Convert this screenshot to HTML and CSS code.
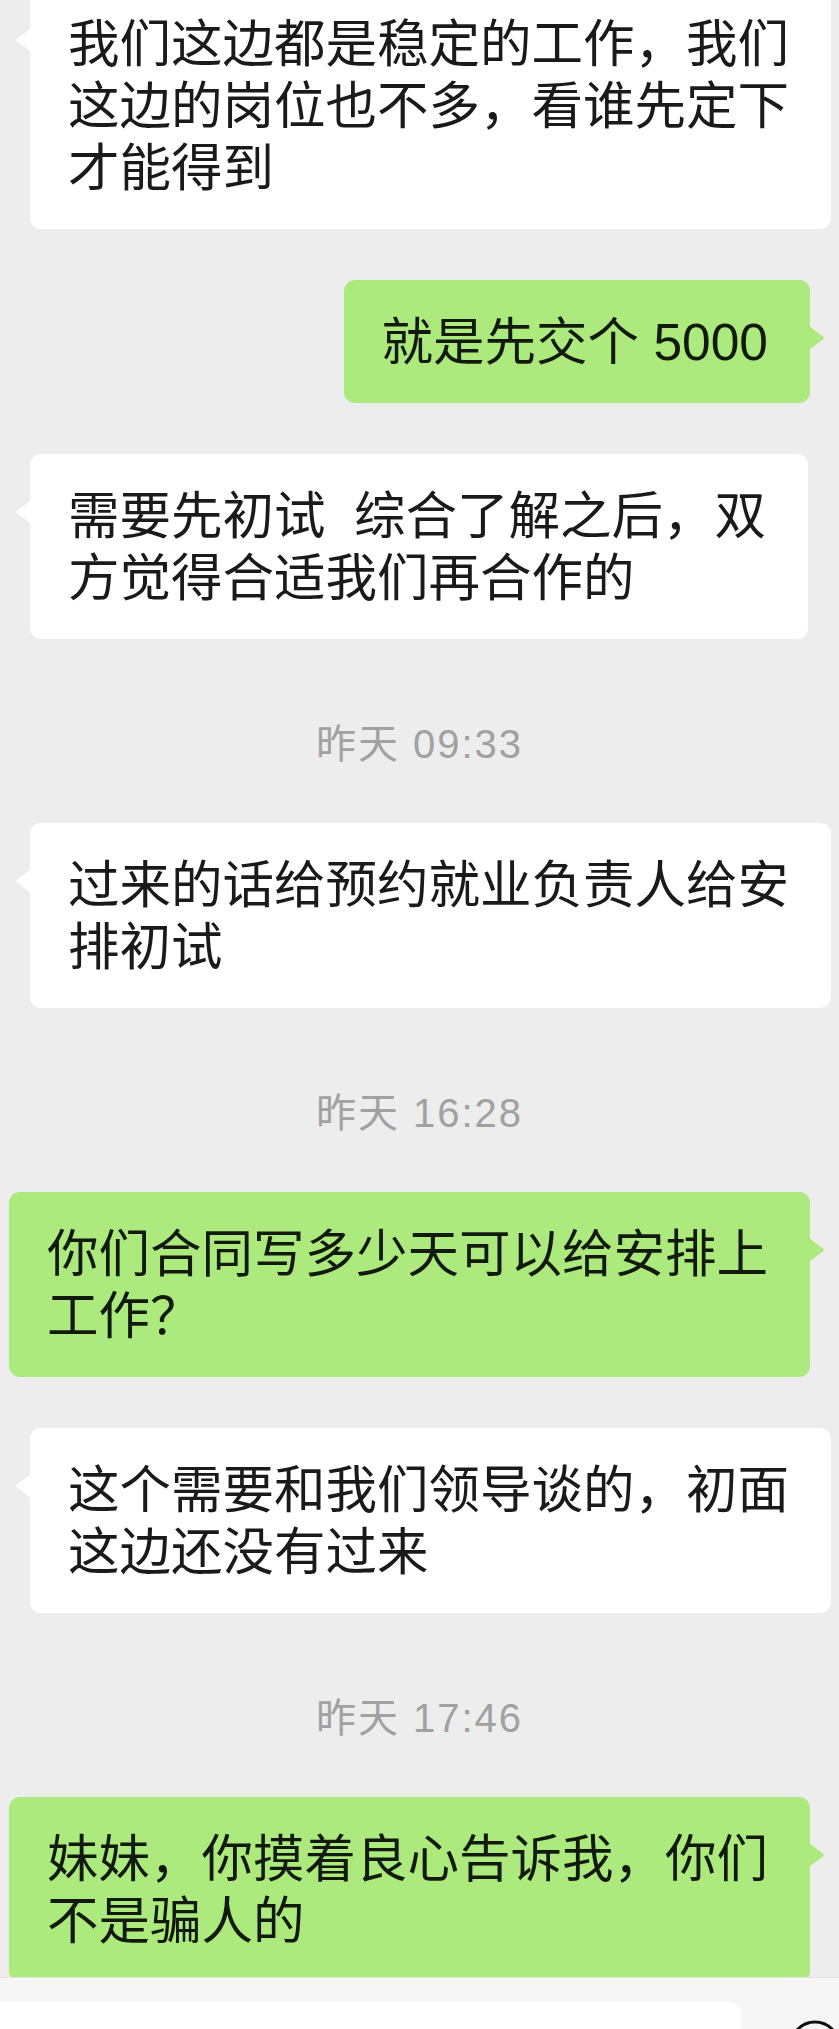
FILE: index.html
```html
<!DOCTYPE html>
<html lang="zh-CN">
<head>
<meta charset="utf-8">
<title>聊天</title>
<link rel="stylesheet" href="styles.css">
</head>
<body>
<main class="chat">
  <div class="bubble in">我们这边都是稳定的工作，我们<br>这边的岗位也不多，看谁先定下<br>才能得到</div>
  <div class="bubble out">就是先交个 5000</div>
  <div class="bubble in">需要先初试&nbsp; 综合了解之后，双<br>方觉得合适我们再合作的</div>
  <div class="time">昨天 09:33</div>
  <div class="bubble in">过来的话给预约就业负责人给安<br>排初试</div>
  <div class="time">昨天 16:28</div>
  <div class="bubble out">你们合同写多少天可以给安排上<br>工作？</div>
  <div class="bubble in">这个需要和我们领导谈的，初面<br>这边还没有过来</div>
  <div class="time">昨天 17:46</div>
  <div class="bubble out">妹妹，你摸着良心告诉我，你们<br>不是骗人的</div>
</main>
<footer class="inputbar">
  <div class="input"></div>
  <svg class="icon" width="52" height="52" viewBox="0 0 52 52"><circle cx="26" cy="26" r="24" fill="none" stroke="#111" stroke-width="3"/></svg>
</footer>
</body>
</html>
```
FILE: styles.css
```css
html, body {
  margin: 0;
  padding: 0;
}
body {
  background: #ededed;
  height: 2029px;
  overflow: hidden;
  font-family: "Liberation Sans", "Noto Sans CJK SC", sans-serif;
}
.chat {
  display: flex;
  flex-direction: column;
  gap: 51px;
  margin-top: -18px;
}
.bubble {
  position: relative;
  box-sizing: border-box;
  max-width: 820px;
  padding: 31px 42px 30px 38px;
  font-size: 51.5px;
  line-height: 62px;
  border-radius: 11px;
  white-space: nowrap;
}
.bubble.in {
  align-self: flex-start;
  margin-left: 30px;
  background: #ffffff;
  color: #1a1a1a;
}
.bubble.out {
  align-self: flex-end;
  margin-right: 29px;
  background: #acea7d;
  color: #111a0c;
}
.bubble::before {
  content: "";
  position: absolute;
  top: 46px;
  width: 16px;
  height: 24px;
  background: inherit;
}
.bubble.in::before {
  left: -15px;
  clip-path: path("M16 0 L2.2 10.4 Q0 12 2.2 13.6 L16 24 Z");
}
.bubble.out::before {
  right: -15px;
  clip-path: path("M0 0 L13.8 10.4 Q16 12 13.8 13.6 L0 24 Z");
}
.time {
  align-self: center;
  margin-top: 34px;
  margin-bottom: 8px;
  font-size: 40px;
  line-height: 40px;
  letter-spacing: 2px;
  color: #a1a1a1;
}
.inputbar {
  position: fixed;
  left: 0;
  right: 0;
  bottom: 0;
  height: 52px;
  box-sizing: border-box;
  padding-top: 24px;
  background: #f6f6f6;
  border-top: 1px solid #e4e4e4;
  display: flex;
  align-items: flex-start;
  gap: 48px;
  overflow: hidden;
}
.input {
  width: 741px;
  height: 70px;
  flex: none;
  background: #ffffff;
  border-radius: 0 12px 12px 0;
}
.icon {
  flex: none;
  margin-top: 18px;
}
```
